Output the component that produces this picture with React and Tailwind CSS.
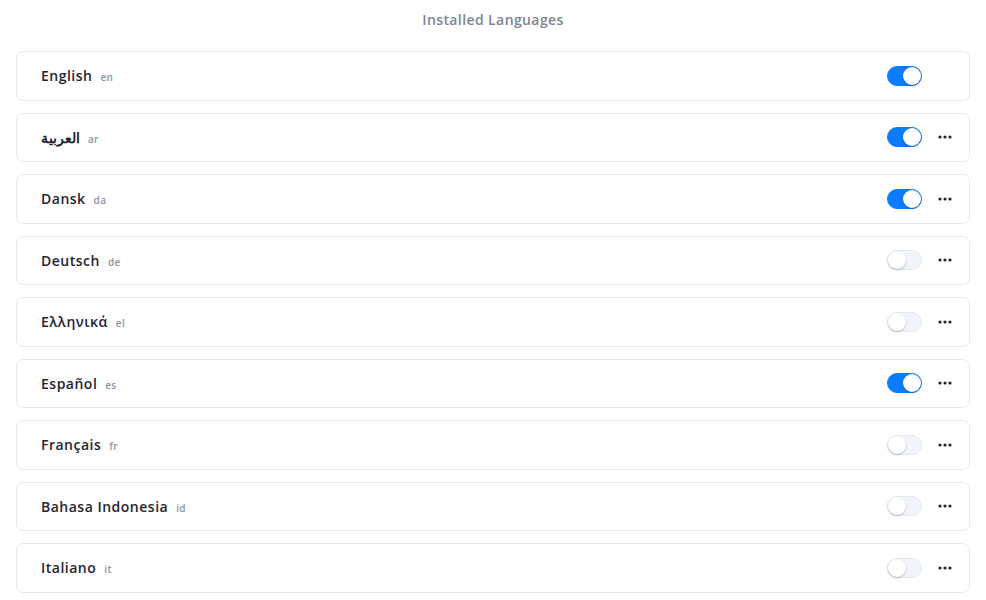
import { useState } from 'react'

const languages = [
  { name: 'English', code: 'en', on: true, locked: true },
  { name: 'العربية', code: 'ar', on: true },
  { name: 'Dansk', code: 'da', on: true },
  { name: 'Deutsch', code: 'de', on: false },
  { name: 'Ελληνικά', code: 'el', on: false },
  { name: 'Español', code: 'es', on: true },
  { name: 'Français', code: 'fr', on: false },
  { name: 'Bahasa Indonesia', code: 'id', on: false },
  { name: 'Italiano', code: 'it', on: false },
]

function Toggle({ on, onClick }) {
  return (
    <button
      type="button"
      onClick={onClick}
      className={
        'relative w-[35px] h-[20px] rounded-full border transition-colors ' +
        (on ? 'bg-[#0b7bff] border-[#0b7bff]' : 'bg-[#f1f4f8] border-[#e3e8ef]')
      }
    >
      <span
        className={
          'absolute top-[0px] w-[18px] h-[18px] rounded-full bg-white shadow-[0_1px_2px_rgba(0,0,0,0.25)] transition-all ' +
          (on ? 'left-[15px]' : 'left-[0px]')
        }
      />
    </button>
  )
}

function Dots() {
  return (
    <svg width="14" height="4" viewBox="0 0 14 4" className="text-[#1f2433]">
      <circle cx="2" cy="2" r="1.6" fill="currentColor" />
      <circle cx="7" cy="2" r="1.6" fill="currentColor" />
      <circle cx="12" cy="2" r="1.6" fill="currentColor" />
    </svg>
  )
}

export default function App() {
  const [items, setItems] = useState(languages)

  function flip(i) {
    setItems((prev) => prev.map((l, j) => (j === i ? { ...l, on: !l.on } : l)))
  }

  return (
    <div className="min-h-screen bg-white px-4 font-['Open_Sans',sans-serif]">
      <h1 className="pt-[9px] pb-[20px] text-center text-[14px] font-semibold tracking-[0.4px] text-[#7c8499] leading-[22px]">
        Installed Languages
      </h1>
      <div className="flex flex-col gap-[12px]">
        {items.map((l, i) => (
          <div
            key={l.code}
            className="h-[49.5px] rounded-[7px] border border-[#e6e9ef] bg-white flex items-center pl-6 pr-[17px]"
          >
            <div className="flex items-baseline gap-[8px] flex-1 min-w-0">
              <span className="text-[14px] font-semibold tracking-[0.5px] text-[#1f2433]">{l.name}</span>
              <span className="text-[10px] font-semibold tracking-[0.3px] text-[#8a93a7]">{l.code}</span>
            </div>
            <Toggle on={l.on} onClick={() => flip(i)} />
            <div className="w-[30px] h-[20px] flex items-center justify-end">
              {!l.locked && <Dots />}
            </div>
          </div>
        ))}
      </div>
    </div>
  )
}
